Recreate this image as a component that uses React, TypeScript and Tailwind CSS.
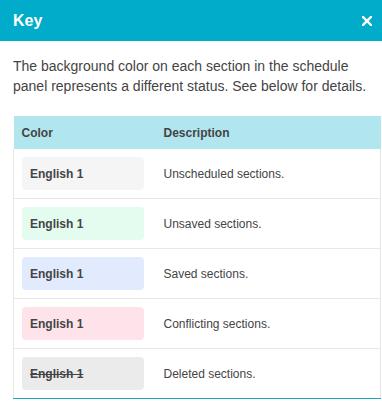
const ROWS = [
  { label: 'Unscheduled sections.', swatch: 'bg-[#f5f5f5]', deleted: false },
  { label: 'Unsaved sections.', swatch: 'bg-[#e3fcef]', deleted: false },
  { label: 'Saved sections.', swatch: 'bg-[#e2ebfd]', deleted: false },
  { label: 'Conflicting sections.', swatch: 'bg-[#fee4ea]', deleted: false },
  { label: 'Deleted sections.', swatch: 'bg-[#ebebeb]', deleted: true }
];

export default function App() {
  return (
    <div className="w-[382px] h-[403px] overflow-hidden bg-white font-['Liberation_Sans',Arial,sans-serif] text-[#444]">
      <header className="h-[41px] bg-[#00acc9] flex items-center justify-between pl-[13px] pr-[6px]">
        <h1 className="text-[16px] font-bold text-white leading-none">Key</h1>
        <span className="w-[18px] h-[18px] flex items-center justify-center">
          <svg width="10" height="10" viewBox="0 0 10 10">
            <path d="M1 1 L9 9 M9 1 L1 9" stroke="white" strokeWidth="2.4" strokeLinecap="square" />
          </svg>
        </span>
      </header>

      <div className="pl-[13px] pr-px pt-[15px]">
        <p className="text-[14px] leading-[20px] pr-3">
          The background color on each section in the schedule panel represents a different status. See below for details.
        </p>

        <table className="mt-[20px] w-full border-collapse text-[12px]">
          <thead>
            <tr className="bg-[#b1e6ef] h-[33px]">
              <th className="w-[142px] text-left font-bold pl-[8px]">Color</th>
              <th className="text-left font-bold pl-[8px]">Description</th>
            </tr>
          </thead>
          <tbody className="border-x border-[#e6e6e6]">
            {ROWS.map((row, i) => (
              <tr
                key={row.label}
                className={i === ROWS.length - 1 ? 'border-b border-[#1ba5bc]' : 'border-b border-[#e8e8e8]'}
              >
                <td className="pl-[8px] py-[8px]">
                  <div className={`${row.swatch} w-[122px] h-[33px] rounded-[4px] flex items-center pl-[8px] font-bold`}>
                    <span className={row.deleted ? 'line-through' : ''}>English 1</span>
                  </div>
                </td>
                <td className="pl-[8px]">{row.label}</td>
              </tr>
            ))}
          </tbody>
        </table>
      </div>
    </div>
  );
}
